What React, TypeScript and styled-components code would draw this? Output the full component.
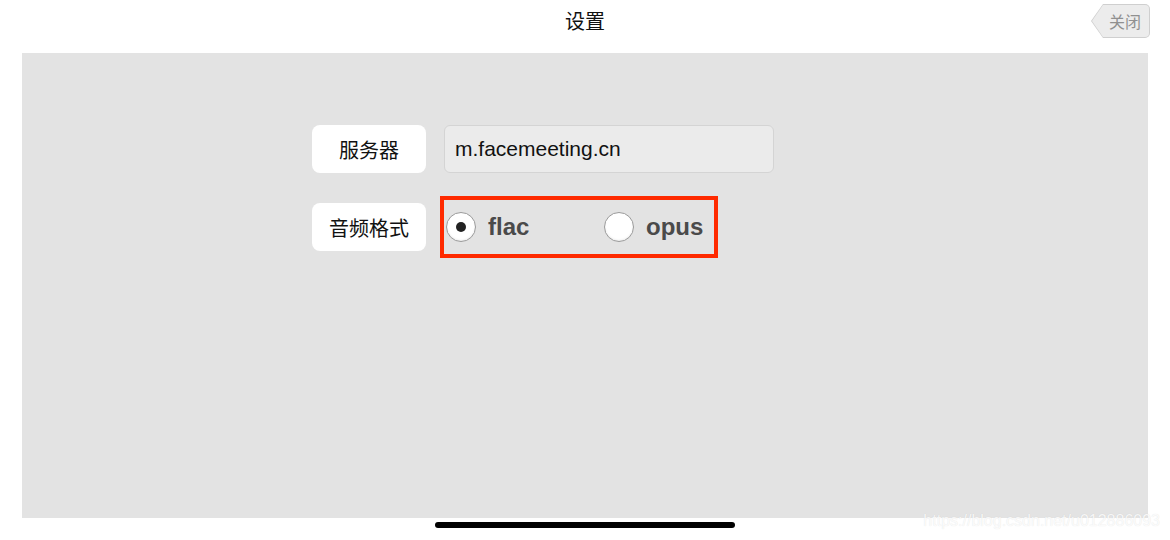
import styled, { createGlobalStyle } from "styled-components";

const GlobalStyle = createGlobalStyle`
  html, body {
    margin: 0;
    padding: 0;
    background: #ffffff;
  }
  body {
    font-family: "Liberation Sans", "Noto Sans CJK SC", sans-serif;
  }
`;

export default function App() {
  return (
    <>
      <GlobalStyle />
      <Page>
        <Header>
          <Title>设置</Title>
          <CloseButton>
            <CloseArrow />
            <CloseBody>关闭</CloseBody>
          </CloseButton>
        </Header>
        <Panel>
          <Form>
            <Row>
              <Label>服务器</Label>
              <Input>m.facemeeting.cn</Input>
            </Row>
            <Row>
              <Label>音频格式</Label>
              <Highlight>
                <Option>
                  <Radio $checked />
                  <OptionText>flac</OptionText>
                </Option>
                <Option>
                  <Radio />
                  <OptionText>opus</OptionText>
                </Option>
              </Highlight>
            </Row>
          </Form>
        </Panel>
        <Footer>
          <HomeBar />
          <Watermark>https://blog.csdn.net/u012886093</Watermark>
        </Footer>
      </Page>
    </>
  );
}

const Page = styled.div`
  width: 1170px;
  height: 540px;
  display: flex;
  flex-direction: column;
  overflow: hidden;
`;

const Header = styled.div`
  position: relative;
  height: 53px;
  display: flex;
  justify-content: center;
  align-items: flex-start;
`;

const Title = styled.div`
  margin-top: 9px;
  font-size: 20px;
  color: #111;
  font-family: "Noto Sans CJK SC", sans-serif;
  line-height: 24px;
`;

const CloseButton = styled.div`
  position: absolute;
  top: 4px;
  left: 1091px;
  height: 34px;
  display: flex;
`;

const CloseArrow = styled.div`
  width: 0;
  height: 0;
  border-top: 17px solid transparent;
  border-bottom: 17px solid transparent;
  border-right: 12px solid #cfcfcf;
  position: relative;

  &::after {
    content: "";
    position: absolute;
    top: -16px;
    left: 1px;
    border-top: 16px solid transparent;
    border-bottom: 16px solid transparent;
    border-right: 11px solid #ececec;
  }
`;

const CloseBody = styled.div`
  width: 44px;
  height: 32px;
  background: #ececec;
  border: 1px solid #cfcfcf;
  border-left: none;
  border-radius: 0 5px 5px 0;
  display: flex;
  align-items: center;
  justify-content: center;
  font-size: 16px;
  color: #909090;
  font-family: "Noto Sans CJK SC", sans-serif;
  padding-right: 2px;
`;

const Panel = styled.div`
  margin: 0 22px;
  height: 465px;
  background: #e3e3e3;
  display: flex;
  justify-content: flex-start;
  padding-left: 290px;
`;

const Form = styled.div`
  margin-top: 72px;
  display: flex;
  flex-direction: column;
  gap: 30px;
`;

const Row = styled.div`
  display: flex;
  align-items: center;
  gap: 18px;
  height: 48px;
`;

const Label = styled.div`
  width: 114px;
  height: 48px;
  background: #ffffff;
  border-radius: 8px;
  display: flex;
  align-items: center;
  justify-content: center;
  font-size: 20px;
  color: #111;
  font-family: "Noto Sans CJK SC", sans-serif;
`;

const Input = styled.div`
  width: 318px;
  height: 46px;
  background: #ebebeb;
  border: 1px solid #d4d4d4;
  border-radius: 6px;
  display: flex;
  align-items: center;
  padding-left: 10px;
  font-size: 21px;
  color: #111;
`;

const Highlight = styled.div`
  margin-left: -4px;
  width: 268px;
  height: 54px;
  border: 4px solid #ff2a00;
  display: flex;
  align-items: center;
  padding-left: 2px;
  gap: 30px;
`;

const Option = styled.div`
  flex: none;
  display: flex;
  align-items: center;
  gap: 12px;
  width: 128px;
`;

const Radio = styled.div<{ $checked?: boolean }>`
  width: 28px;
  height: 28px;
  border-radius: 50%;
  background: #ffffff;
  border: 1px solid #9a9a9a;
  display: flex;
  align-items: center;
  justify-content: center;
  box-shadow: inset 0 -1px 2px rgba(0, 0, 0, 0.08);

  &::after {
    content: "";
    display: ${(p) => (p.$checked ? "block" : "none")};
    width: 10px;
    height: 10px;
    border-radius: 50%;
    background: #222;
  }
`;

const OptionText = styled.div`
  font-size: 24px;
  font-weight: bold;
  color: #4a4a4a;
`;

const Footer = styled.div`
  position: relative;
  flex: 1;
  display: flex;
  justify-content: center;
`;

const HomeBar = styled.div`
  margin-top: 4px;
  width: 300px;
  height: 6px;
  border-radius: 3px;
  background: #000;
`;

const Watermark = styled.div`
  position: absolute;
  right: 10px;
  top: -6px;
  font-size: 16px;
  color: rgba(255, 255, 255, 0.85);
  text-shadow: 0 0 1px rgba(0, 0, 0, 0.12);
`;
